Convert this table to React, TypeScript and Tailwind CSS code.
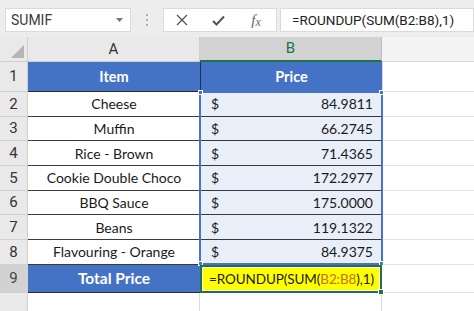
import React from "react";

const rows: [string, string][] = [
  ["Cheese", "84.9811"],
  ["Muffin", "66.2745"],
  ["Rice - Brown", "71.4365"],
  ["Cookie Double Choco", "172.2977"],
  ["BBQ Sauce", "175.0000"],
  ["Beans", "119.1322"],
  ["Flavouring - Orange", "84.9375"],
];

const cellFont = { fontFamily: "Lato, 'Liberation Sans', sans-serif" };
const uiFont = { fontFamily: "Roboto, 'Noto Sans', sans-serif" };

function RowHead({ n, sel }: { n?: number; sel?: boolean }) {
  return (
    <div
      className={`w-[28px] shrink-0 flex items-center justify-center border-r border-b border-[#d0d0d0] text-[15px] ${
        sel ? "bg-[#d2d2d2] text-[#444]" : "bg-[#e9e9e9] text-[#333]"
      }`}
      style={uiFont}
    >
      {n}
    </div>
  );
}

export default function App() {
  return (
    <div className="w-[474px] h-[311px] overflow-hidden bg-white relative" style={cellFont}>
      {/* toolbar */}
      <div className="h-[37px] bg-[#ededed] flex items-center pt-[3px]">
        <div className="ml-[5px] w-[126px] h-[24px] bg-white border border-[#dadada] flex items-center justify-between pl-[5px] pr-[7px]">
          <span className="text-[14px] text-[#3a3a3a]" style={uiFont}>SUMIF</span>
          <svg width="7" height="4" viewBox="0 0 7 4"><path d="M0 0h7L3.5 4z" fill="#777" /></svg>
        </div>
        <div className="w-[32px] flex flex-col items-center gap-[3px]">
          <div className="w-[2px] h-[2px] bg-[#b0b0b0]" />
          <div className="w-[2px] h-[2px] bg-[#b0b0b0]" />
          <div className="w-[2px] h-[2px] bg-[#b0b0b0]" />
        </div>
        <div className="w-[114px] h-[24px] bg-white border border-[#dadada] flex items-center">
          <div className="w-[36px] flex justify-center">
            <svg width="12" height="12" viewBox="0 0 12 12"><path d="M1 1l10 10M11 1L1 11" stroke="#555" strokeWidth="1.3" /></svg>
          </div>
          <div className="w-[36px] flex justify-center">
            <svg width="13" height="11" viewBox="0 0 13 11"><path d="M1 6l3.5 3.5L12 1.5" stroke="#555" strokeWidth="2" fill="none" /></svg>
          </div>
          <div className="w-[40px] flex justify-center text-[#666] text-[15px] italic" style={{ fontFamily: "'Liberation Serif', serif" }}>
            <span>f</span><span className="text-[12px] mt-[4px]">x</span>
          </div>
        </div>
        <div className="ml-[3px] flex-1 h-[24px] bg-white border border-[#dadada] flex items-center pl-[11px] text-[13.5px] text-[#222] whitespace-nowrap" style={uiFont}>
          =ROUNDUP(SUM(B2:B8),1)
        </div>
      </div>

      {/* column header row */}
      <div className="flex h-[25px]">
        <div className="w-[28px] shrink-0 bg-[#e9e9e9] border-r border-b border-[#cfcfcf] relative">
          <svg className="absolute right-[3px] bottom-[3px]" width="13" height="13" viewBox="0 0 13 13"><path d="M13 0V13H0z" fill="#b5b5b5" /></svg>
        </div>
        <div className="w-[172px] shrink-0 bg-[#e9e9e9] border-r border-b border-[#cfcfcf] flex items-center justify-center text-[15px] text-[#333]" style={uiFont}>A</div>
        <div className="w-[182px] shrink-0 bg-[#d3d3d3] border-r border-[#bdbdbd] border-b-2 border-b-[#217346] flex items-center justify-center text-[15px] text-[#217346]" style={uiFont}>B</div>
        <div className="flex-1 bg-[#f4f4f4] border-b border-[#d8d8d8]" />
      </div>

      {/* row 1 */}
      <div className="flex h-[30px]">
        <RowHead n={1} />
        <div className="w-[172px] shrink-0 bg-[#4472c4] border-b border-[#2b2b2b] flex items-center justify-center text-white font-bold text-[14.5px]">Item</div>
        <div className="w-[182px] shrink-0 bg-[#4472c4] border-l border-b border-[#1f2f55] flex items-center justify-center text-white font-bold text-[14.5px]">Price</div>
        <div className="flex-1 border-l border-[#d8d8d8] border-b border-b-[#e4e4e4]" />
      </div>

      {/* rows 2-8 */}
      <div className="relative">
        {rows.map(([item, price], i) => (
          <div key={i} className="flex h-[24.7px]">
            <RowHead n={i + 2} />
            <div className="w-[172px] shrink-0 bg-white border-b border-[#3a3a3a] flex items-center justify-center text-[14px] text-[#1a1a1a]">{item}</div>
            <div className="w-[182px] shrink-0 bg-[#e9eff8] border-b border-[#3a3a3a] flex items-center justify-between pl-[11px] pr-[9px] text-[14px] text-[#1a1a1a]">
              <span>$</span>
              <span>{price}</span>
            </div>
            <div className="flex-1 border-b border-[#e4e4e4]" />
          </div>
        ))}
        {/* reference highlight B2:B8 */}
        <div className="absolute left-[199px] top-[-1px] w-[184px] bottom-0 border-2 border-[#4a74c0] pointer-events-none">
          <div className="absolute -left-[3px] -top-[3px] w-[5px] h-[5px] bg-[#4a74c0] border border-white" />
          <div className="absolute -right-[3px] -top-[3px] w-[5px] h-[5px] bg-[#4a74c0] border border-white" />
          <div className="absolute -left-[3px] -bottom-[3px] w-[5px] h-[5px] bg-[#4a74c0] border border-white" />
          <div className="absolute -right-[3px] -bottom-[3px] w-[5px] h-[5px] bg-[#4a74c0] border border-white" />
        </div>
      </div>

      {/* row 9 */}
      <div className="flex h-[28px]">
        <RowHead n={9} sel />
        <div className="w-[172px] shrink-0 bg-[#4472c4] border-b border-[#2b2b2b] flex items-center justify-center text-white font-bold text-[15.5px]">Total Price</div>
        <div className="w-[182px] shrink-0 bg-white border-2 border-[#217346] p-[1px] relative">
          <div className="h-full bg-[#ffff00] flex items-center pl-[6px] text-[13.5px] text-[#1a1a1a] whitespace-nowrap tracking-[-0.1px]">
            =ROUNDUP(SUM(<span className="text-[#c8711c]">B2:B8</span>),1)
          </div>
          <div className="absolute -right-[4px] -bottom-[4px] w-[6px] h-[6px] bg-[#217346] border border-white" />
        </div>
        <div className="flex-1 border-b border-[#e4e4e4]" />
      </div>

      {/* row 10 partial */}
      <div className="flex h-[30px]">
        <RowHead />
        <div className="w-[172px] shrink-0 border-r border-[#dcdcdc]" />
        <div className="w-[182px] shrink-0 border-r border-[#dcdcdc]" />
        <div className="flex-1" />
      </div>
    </div>
  );
}
